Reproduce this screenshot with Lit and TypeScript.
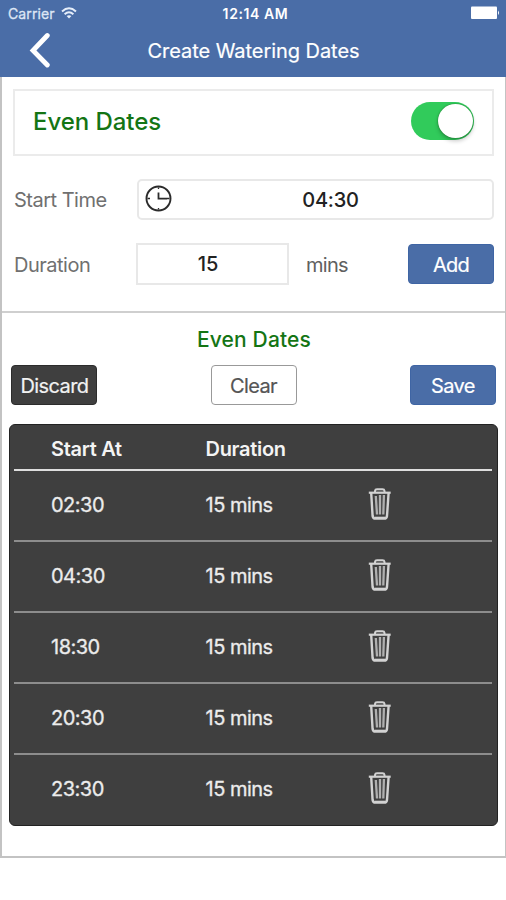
import { LitElement, html, css } from "lit";
import { customElement, property, state } from "lit/decorators.js";

@customElement("trash-icon")
class TrashIcon extends LitElement {
  static styles = css`
    :host { display: block; width: 24px; height: 34px; }
    svg { display: block; }
  `;
  render() {
    return html`<svg width="24" height="34" viewBox="0 0 24 34" fill="none" stroke="#d2d2d2">
      <path d="M7 5 V3.800 Q7.200 2.200 9 2.200 H14.500 Q16.300 2.200 16.500 3.800 V5" stroke-width="2" />
      <path d="M0.800 5.700 H22.700" stroke-width="2.200" />
      <path d="M3.200 6 L4.600 29 Q5 31.600 7.500 31.600 H16 Q18.700 31.600 19 29 L20.600 6" stroke-width="2.400" />
      <path d="M7.800 9 L9 27.500 M12 8 V27.500 M15.900 8 L15.300 27.500" stroke-width="2.300" stroke="#b0b0b0" />
      <path d="M6.500 30.600 H17" stroke-width="1.800" />
    </svg>`;
  }
}

@customElement("toggle-switch")
class ToggleSwitch extends LitElement {
  @property({ type: Boolean }) on = false;
  static styles = css`
    :host { display: block; }
    .track { box-sizing: border-box; width: 63px; height: 38px; border-radius: 19px; background: #ddd; padding: 2px 1.5px; display: flex; }
    .track.on { background: #31cb5b; justify-content: flex-end; }
    .knob { width: 34.5px; height: 34px; border-radius: 50%; background: #fff; box-shadow: 0 3px 4px rgba(0, 0, 0, 0.22), 0 0 1.5px rgba(0, 70, 0, 0.7); }
  `;
  render() {
    return html`<div class="track ${this.on ? "on" : ""}"><div class="knob"></div></div>`;
  }
}

@customElement("app-root")
class AppRoot extends LitElement {
  @state() times = ["02:30", "04:30", "18:30", "20:30", "23:30"];

  static styles = css`
    :host { display: block; width: 506px; height: 900px; background: #fff; font-family: Inter, "Liberation Sans", sans-serif; font-size: 20px; color: #666; overflow: hidden; }
    * { box-sizing: border-box; }
    header { height: 77px; background: #4a6da7; color: #fff; }
    .status { height: 27px; display: grid; grid-template-columns: 1fr auto 1fr; align-items: center; padding: 0 6px 0 8px; font-size: 14px; }
    .carrier { display: flex; align-items: center; gap: 6px; color: #dde6f5; }
    .carrier span { letter-spacing: 0.1px; -webkit-text-stroke: 0.3px; }
    .carrier svg { margin-top: -2px; }
    .clock { font-weight: 600; letter-spacing: 0.6px; padding-left: 3px; }
    .battery { justify-self: end; margin-top: -2px; }
    .nav { height: 50px; display: grid; grid-template-columns: 60px 1fr 60px; align-items: center; }
    .back { padding-left: 28px; height: 40px; }
    .title { text-align: center; padding-left: 1px; line-height: 48px; height: 50px; letter-spacing: -0.05px; -webkit-text-stroke: 0.2px; }
    svg { display: block; }
    main { height: 781px; border: solid #c3c3c3; border-width: 0 1px 2px 2px; }
    .form { height: 236px; border-bottom: 2px solid #cfcfcf; padding: 11.5px 11px 0; }
    .card { height: 67px; border: 2px solid #ebebeb; display: flex; align-items: center; justify-content: space-between; padding: 0 18px 2px 18px; color: #147514; font-size: 24px; font-weight: 500; letter-spacing: -0.05px; }
    .row { display: flex; align-items: center; }
    .start { margin-top: 23px; height: 41px; }
    .duration { margin-top: 23px; height: 42px; }
    .label { padding: 2px 0 0 1px; width: 124px; color: #707070; font-weight: 400; letter-spacing: -0.5px; }
    .duration .label { width: 123px; }
    .field { border: 2px solid #e8e8e8; color: #222; font-weight: 500; display: flex; align-items: center; }
    .time { width: 357px; height: 41px; border-radius: 5px; padding: 0 0 2px 6px; }
    .time span { flex: 1; text-align: center; padding: 3px 3px 0 0; letter-spacing: -0.2px; }
    .minutes { width: 153px; height: 42px; justify-content: center; padding-right: 9px; }
    .unit { flex: 1; padding: 2px 0 0 17px; color: #606060; font-weight: 400; letter-spacing: -0.7px; }
    .btn { width: 86px; height: 40px; border-radius: 4px; display: flex; align-items: center; justify-content: center; color: #fff; background: #4a6da7; border: 1px solid #3f65a4; letter-spacing: -0.6px; padding-top: 1px; -webkit-text-stroke: 0.2px; }
    .btn.dark { background: #3f3f3f; border-color: #2c2c2c; color: #f2f2f2; padding-left: 1px; }
    .btn.plain { background: #fff; border: 1.5px solid #999; color: #555; }
    .duration .btn { letter-spacing: -0.7px; margin-top: 1px; }
    .heading { height: 52px; line-height: 53px; text-align: center; color: #147514; font-size: 21px; font-weight: 500; letter-spacing: 0.15px; padding-left: 1px; }
    .actions { display: flex; justify-content: space-between; padding: 0 9px 0 9px; }
    .table { margin: 19px 7px 0 7px; height: 402px; border-radius: 6px; background: #3f3f3f; border: 1px solid #222; color: #ececec; padding: 0 5px 0 4px; }
    .tr { height: 71px; display: grid; grid-template-columns: 154.500px 162.500px 1fr; align-items: center; padding: 0 0 1px 37px; border-bottom: 2px solid #8d8d8d; letter-spacing: -0.5px; -webkit-text-stroke: 0.3px; }
    .tr trash-icon { margin-bottom: 2px; }
    .tr.head { height: 46px; padding-top: 4px; font-weight: 600; color: #f4f4f4; border-bottom-color: #dedede; -webkit-text-stroke: 0; letter-spacing: -0.3px; }
    .tr:last-child { border-bottom-color: transparent; }
  `;

  render() {
    return html`
      <header>
        <div class="status">
          <div class="carrier">
            <span>Carrier</span>
            <svg width="16" height="12" viewBox="0 0 16 12" fill="none" stroke="#e6eefa" stroke-width="1.900">
              <path d="M1 4.500 Q8 -1.900 15 4.500" /><path d="M3.600 7.300 Q8 3.300 12.400 7.300" />
              <path d="M8 11.500 L5.600 9 Q8 7.300 10.400 9 Z" fill="#e6eefa" stroke="none" />
            </svg>
          </div>
          <div class="clock">12:14 AM</div>
          <svg class="battery" width="29" height="14" viewBox="0 0 29 14" fill="#fff">
            <rect x="0" y="0.500" width="26" height="12.500" rx="1" /><path d="M27 4.500 Q29 6.800 27 9 Z" />
          </svg>
        </div>
        <div class="nav">
          <div class="back">
            <svg width="24" height="36" viewBox="0 0 24 36" fill="none" stroke="#fff" stroke-width="4.800" stroke-linecap="round">
              <path d="M19.300 3.500 L5 18.500 L19.300 33" />
            </svg>
          </div>
          <div class="title">Create Watering Dates</div>
        </div>
      </header>
      <main>
        <div class="form">
          <div class="card"><span>Even Dates</span><toggle-switch .on=${true}></toggle-switch></div>
          <div class="row start">
            <div class="label">Start Time</div>
            <div class="field time">
              <svg width="27" height="27" viewBox="0 0 27 27" fill="none" stroke="#2b2b2b">
                <circle cx="13.500" cy="13.500" r="12" stroke-width="1.900" />
                <path d="M13.500 7.500 V13.700 H22" stroke-width="1.800" />
                <path d="M2.500 13.500 H5 M22 13.500 H24.500 M13.500 2.500 V4 M13.500 23 V24.500" stroke-width="1.300" />
              </svg>
              <span>04:30</span>
            </div>
          </div>
          <div class="row duration">
            <div class="label">Duration</div>
            <div class="field minutes">15</div>
            <div class="unit">mins</div>
            <div class="btn">Add</div>
          </div>
        </div>
        <div class="heading">Even Dates</div>
        <div class="actions">
          <div class="btn dark">Discard</div>
          <div class="btn plain">Clear</div>
          <div class="btn">Save</div>
        </div>
        <div class="table">
          <div class="tr head"><span>Start At</span><span>Duration</span></div>
          ${this.times.map(
            (t) => html`<div class="tr"><span>${t}</span><span>15 mins</span><trash-icon></trash-icon></div>`
          )}
        </div>
      </main>
    `;
  }
}
